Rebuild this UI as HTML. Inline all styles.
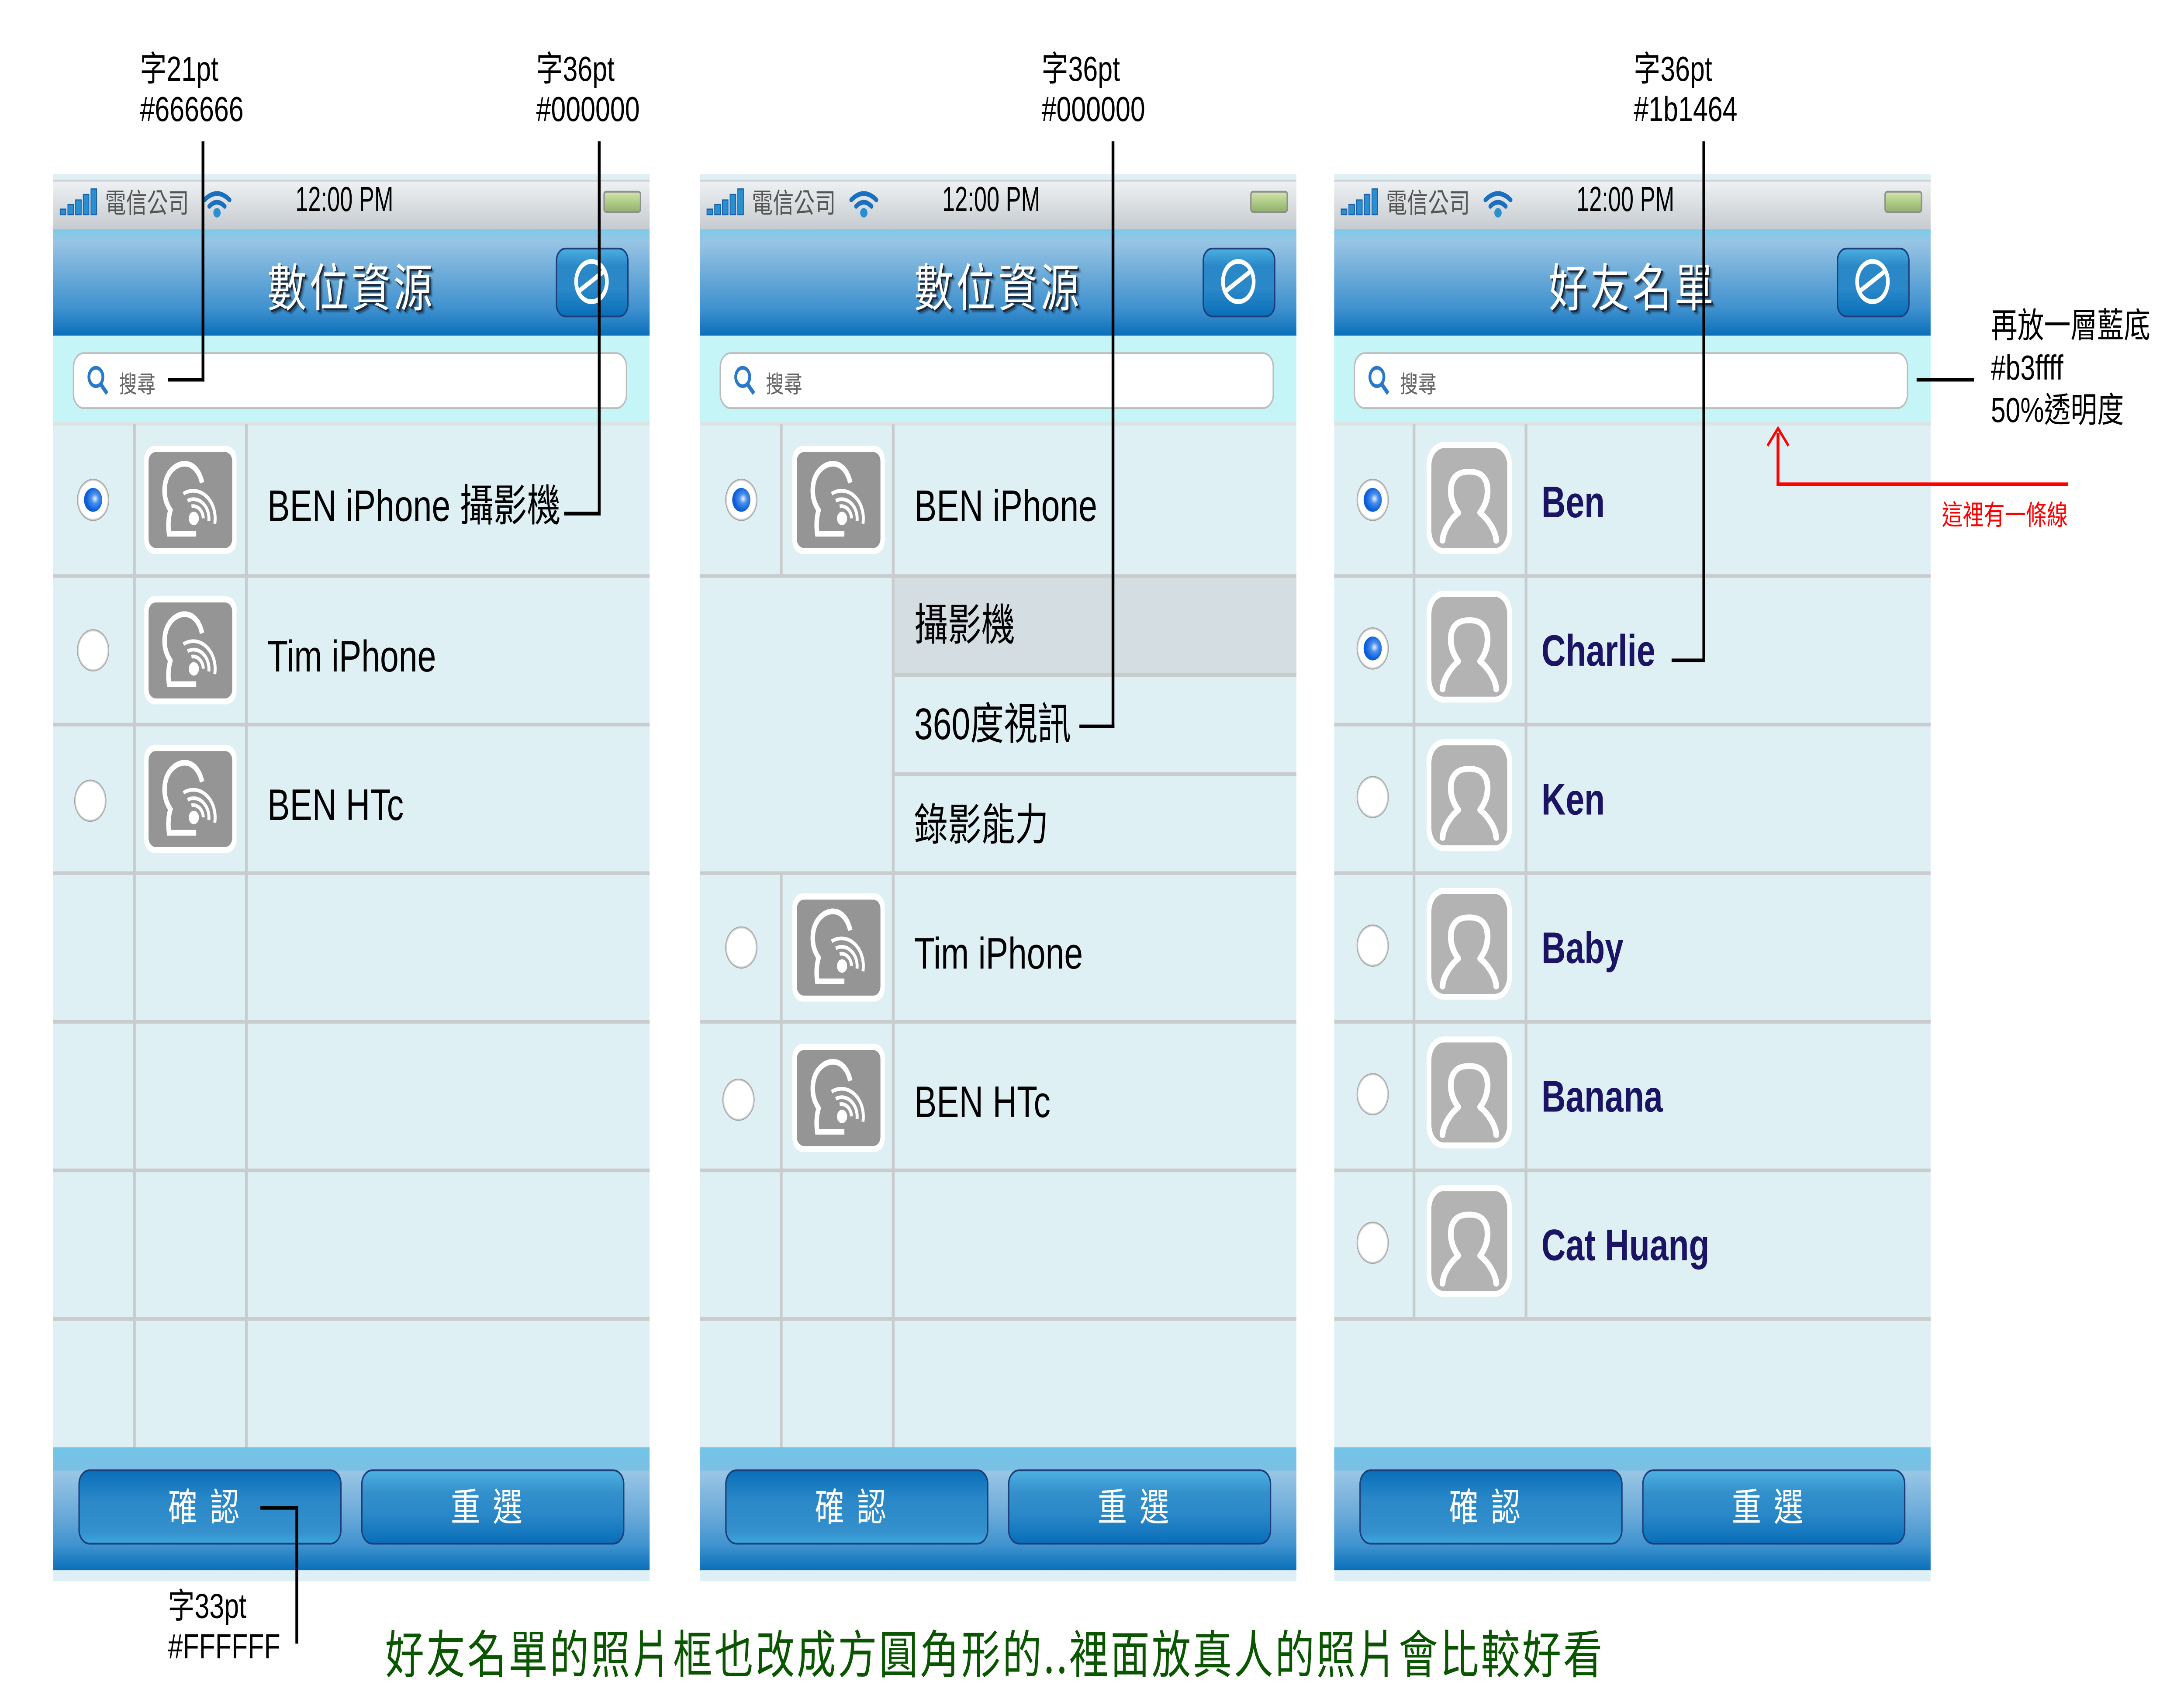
<!DOCTYPE html>
<html><head><meta charset="utf-8"><style>
*{margin:0;padding:0;box-sizing:border-box}
html,body{width:100%;height:100%;overflow:hidden;background:#fff}
#s{position:absolute;left:0;top:0;width:1560px;height:930px;transform:scale(4.1987);transform-origin:0 0;font-family:"Liberation Sans","Noto Sans CJK TC",sans-serif}
.a{position:absolute}
.ph{position:absolute;top:0;width:426px;height:930px}
.strip{position:absolute;left:0;width:426px;background:#dff0f5}
.sb{position:absolute;left:0;top:98px;width:426px;height:27px;background:linear-gradient(#eef1f3,#c6cbcf);border-top:1px solid #cfd3d6}
.nav{position:absolute;left:0;top:125px;width:426px;height:58px;background:linear-gradient(#7ccbea 0%,#97c4e4 12%,#68a9d8 45%,#3f91cf 75%,#0a6fb9 100%)}
.ttl{position:absolute;left:0;width:426px;top:136px;text-align:center;color:#fff;font-size:28px;letter-spacing:2px;text-shadow:1px 1px 0 #1a2a40,2px 2px 1px rgba(0,0,0,.4);font-family:"Noto Sans CJK TC",sans-serif}
.nb{position:absolute;left:359px;top:135px;width:52px;height:38px;border:1.5px solid #1c3f7c;border-radius:7px;background:linear-gradient(#4aaee0,#2a88c8 25%,#2a88c8 60%,#0a6fb9)}
.sa{position:absolute;left:0;top:183px;width:426px;height:48px;background:#c5f5f7}
.sx{position:absolute;left:14px;top:192px;width:396px;height:31px;background:#fff;border:1px solid #bdbdbd;border-radius:8px}
.rows{position:absolute;left:0;top:231px;width:426px;height:558px;background:#dff0f5}
.hl{position:absolute;height:2px;background:#c9cccd}
.vl{position:absolute;width:2px;background:#c9cccd}
.rd{position:absolute;width:23px;height:23px;border-radius:50%;background:radial-gradient(circle,#fff 62%,#9a9a9a 70%,#6f6f6f 100%)}
.rd.on::after{content:"";position:absolute;left:5px;top:5px;width:13px;height:13px;border-radius:50%;background:radial-gradient(circle at 60% 45%,#eaf4ff 0,#4b8fee 25%,#0a5fd8 60%,#0858d0 100%)}
.ic{position:absolute;width:66px;height:59px}
.tx{position:absolute;font-size:24px;color:#000;line-height:30px;font-family:"Liberation Sans","Noto Sans CJK TC",sans-serif}
.nm{position:absolute;font-size:24px;color:#1b1464;font-weight:bold;line-height:30px;font-family:"Liberation Sans",sans-serif}
.tb{position:absolute;left:0;top:789px;width:426px;height:67px;background:linear-gradient(#72c5e8 0,#7cbfe4 18%,#99c6e5 20%,#6aaad9 55%,#3f92cf 80%,#0a6fb9 100%)}
.bt{position:absolute;top:801px;width:188px;height:41px;border:1.5px solid #1c3f7c;border-radius:8px;color:#fff;font-size:21px;text-align:center;line-height:38px;letter-spacing:9px;font-family:"Noto Sans CJK TC",sans-serif}
.b1{left:18px;background:linear-gradient(#0a6fb9,#2a88c8 40%,#3590cc 85%,#3aa6dd)}
.b2{left:220px;background:linear-gradient(#4cb0e0,#3490cc 30%,#2a88c8 60%,#0a6fb9)}
.st{position:absolute;top:100px;font-size:15px;color:#555;font-family:"Noto Sans CJK TC",sans-serif}
.tm{position:absolute;top:99px;left:173px;font-size:19px;color:#000;transform:scaleX(.86);transform-origin:0 0;font-family:"Liberation Sans",sans-serif}
.bat{position:absolute;left:393px;top:104px;width:27px;height:12px;border:1px solid #8f8f8f;border-radius:2px;background:linear-gradient(#cfe3a6,#93b46e)}
.srt{position:absolute;top:199px;left:47px;font-size:13px;color:#666;font-family:"Noto Sans CJK TC",sans-serif}
.an{position:absolute;font-size:19px;line-height:22px;color:#000;font-family:"Liberation Sans","Noto Sans CJK TC",sans-serif}
.k{position:absolute;background:#000}
</style></head><body><div id="s">

<!-- ===== PHONE 1 ===== -->
<div class="ph" style="left:38px">
<div class="strip" style="top:95px;height:4px"></div>
<div class="sb"></div>
<svg class="a" style="left:4px;top:102px" width="28" height="16" viewBox="0 0 28 16"><g fill="#2a8fd0" stroke="#1a5fa8" stroke-width=".6"><rect x="1" y="12" width="4" height="3"/><rect x="6.5" y="9.5" width="4" height="5.5"/><rect x="12" y="7" width="4" height="8"/><rect x="17.5" y="4" width="4" height="11"/><rect x="23" y="1" width="4" height="14"/></g></svg>
<div class="st" style="left:37px">電信公司</div>
<svg class="a" style="left:106px;top:103px" width="22" height="16" viewBox="0 0 22 16"><g fill="none" stroke="#1a6fc0" stroke-width="2.6" stroke-linecap="round"><path d="M2 6 Q11 -1 20 6"/><path d="M5.5 9.5 Q11 5 16.5 9.5"/></g><circle cx="11" cy="13" r="2.6" fill="#2a8fd0"/></svg>
<div class="tm">12:00 PM</div>
<div class="bat"></div>
<div class="nav"></div>
<div class="ttl">數位資源</div>
<div class="nb"><svg width="49" height="35" viewBox="0 0 49 35"><circle cx="24.5" cy="17.5" r="11" fill="none" stroke="#fff" stroke-width="2.6"/><line x1="15" y1="23" x2="34" y2="11.5" stroke="#fff" stroke-width="2.6"/></svg></div>
<div class="sa"></div><div class="sx"></div>
<svg class="a" style="left:24px;top:199px" width="16" height="17" viewBox="0 0 16 17"><circle cx="6.5" cy="6.5" r="5" fill="none" stroke="#2a78c8" stroke-width="2"/><line x1="10" y1="10.5" x2="14.5" y2="15.5" stroke="#2a78c8" stroke-width="2.4"/></svg>
<div class="srt">搜尋</div>
<div class="rows"></div>
<div class="hl" style="left:0;width:426px;top:230px;background:#dbe3e5"></div>
<div class="hl" style="left:0;width:426px;top:313px"></div><div class="hl" style="left:0;width:426px;top:394px"></div><div class="hl" style="left:0;width:426px;top:475px"></div><div class="hl" style="left:0;width:426px;top:556px"></div><div class="hl" style="left:0;width:426px;top:637px"></div><div class="hl" style="left:0;width:426px;top:718px"></div>
<div class="vl" style="left:57px;top:231px;height:558px"></div><div class="vl" style="left:137px;top:231px;height:558px"></div>
<div class="rd on" style="left:17px;top:261px"></div>
<div class="rd" style="left:17px;top:343px"></div>
<div class="rd" style="left:15px;top:425px"></div>
<svg class="ic" style="left:65px;top:243px" viewBox="648 58 782 722" preserveAspectRatio="none"><rect x="648" y="58" width="782" height="722" rx="90" fill="#fff"/><rect x="685" y="100" width="708" height="640" rx="60" fill="#959595"/><path d="M1088 645 H858 C850 600 850 540 870 488 C830 440 815 390 822 330 C835 230 920 178 990 178 C1060 178 1115 225 1138 305" fill="none" stroke="#fff" stroke-width="38"/><g fill="none" stroke="#fff" stroke-width="25"><path d="M980 378 A185 185 0 0 1 1245 578"/><path d="M1015 425 A130 130 0 0 1 1195 560"/><path d="M1048 462 A85 85 0 0 1 1148 542"/></g><ellipse cx="1068" cy="543" rx="43" ry="45" fill="#fff"/></svg>
<svg class="ic" style="left:65px;top:325px" viewBox="648 58 782 722" preserveAspectRatio="none"><rect x="648" y="58" width="782" height="722" rx="90" fill="#fff"/><rect x="685" y="100" width="708" height="640" rx="60" fill="#959595"/><path d="M1088 645 H858 C850 600 850 540 870 488 C830 440 815 390 822 330 C835 230 920 178 990 178 C1060 178 1115 225 1138 305" fill="none" stroke="#fff" stroke-width="38"/><g fill="none" stroke="#fff" stroke-width="25"><path d="M980 378 A185 185 0 0 1 1245 578"/><path d="M1015 425 A130 130 0 0 1 1195 560"/><path d="M1048 462 A85 85 0 0 1 1148 542"/></g><ellipse cx="1068" cy="543" rx="43" ry="45" fill="#fff"/></svg>
<svg class="ic" style="left:65px;top:406px" viewBox="648 58 782 722" preserveAspectRatio="none"><rect x="648" y="58" width="782" height="722" rx="90" fill="#fff"/><rect x="685" y="100" width="708" height="640" rx="60" fill="#959595"/><path d="M1088 645 H858 C850 600 850 540 870 488 C830 440 815 390 822 330 C835 230 920 178 990 178 C1060 178 1115 225 1138 305" fill="none" stroke="#fff" stroke-width="38"/><g fill="none" stroke="#fff" stroke-width="25"><path d="M980 378 A185 185 0 0 1 1245 578"/><path d="M1015 425 A130 130 0 0 1 1195 560"/><path d="M1048 462 A85 85 0 0 1 1148 542"/></g><ellipse cx="1068" cy="543" rx="43" ry="45" fill="#fff"/></svg>
<div class="tx" style="left:153px;top:262px">BEN iPhone 攝影機</div>
<div class="tx" style="left:153px;top:344px">Tim iPhone</div>
<div class="tx" style="left:153px;top:425px">BEN HTc</div>
<div class="tb"></div>
<div class="bt b1">確認</div><div class="bt b2">重選</div>
<div class="strip" style="top:856px;height:6px"></div>
</div>

<!-- ===== PHONE 2 ===== -->
<div class="ph" style="left:500px">
<div class="strip" style="top:95px;height:4px"></div>
<div class="sb"></div>
<svg class="a" style="left:4px;top:102px" width="28" height="16" viewBox="0 0 28 16"><g fill="#2a8fd0" stroke="#1a5fa8" stroke-width=".6"><rect x="1" y="12" width="4" height="3"/><rect x="6.5" y="9.5" width="4" height="5.5"/><rect x="12" y="7" width="4" height="8"/><rect x="17.5" y="4" width="4" height="11"/><rect x="23" y="1" width="4" height="14"/></g></svg>
<div class="st" style="left:37px">電信公司</div>
<svg class="a" style="left:106px;top:103px" width="22" height="16" viewBox="0 0 22 16"><g fill="none" stroke="#1a6fc0" stroke-width="2.6" stroke-linecap="round"><path d="M2 6 Q11 -1 20 6"/><path d="M5.5 9.5 Q11 5 16.5 9.5"/></g><circle cx="11" cy="13" r="2.6" fill="#2a8fd0"/></svg>
<div class="tm">12:00 PM</div>
<div class="bat"></div>
<div class="nav"></div>
<div class="ttl">數位資源</div>
<div class="nb"><svg width="49" height="35" viewBox="0 0 49 35"><circle cx="24.5" cy="17.5" r="11" fill="none" stroke="#fff" stroke-width="2.6"/><line x1="15" y1="23" x2="34" y2="11.5" stroke="#fff" stroke-width="2.6"/></svg></div>
<div class="sa"></div><div class="sx"></div>
<svg class="a" style="left:24px;top:199px" width="16" height="17" viewBox="0 0 16 17"><circle cx="6.5" cy="6.5" r="5" fill="none" stroke="#2a78c8" stroke-width="2"/><line x1="10" y1="10.5" x2="14.5" y2="15.5" stroke="#2a78c8" stroke-width="2.4"/></svg>
<div class="srt">搜尋</div>
<div class="rows"></div>
<div class="a" style="left:139px;top:315px;width:287px;height:53px;background:#d4dee2"></div>
<div class="hl" style="left:0;width:426px;top:230px;background:#dbe3e5"></div>
<div class="hl" style="left:0;width:426px;top:313px"></div><div class="hl" style="left:139px;width:287px;top:367px"></div><div class="hl" style="left:139px;width:287px;top:421px"></div><div class="hl" style="left:0;width:426px;top:475px"></div><div class="hl" style="left:0;width:426px;top:556px"></div><div class="hl" style="left:0;width:426px;top:637px"></div><div class="hl" style="left:0;width:426px;top:718px"></div>
<div class="vl" style="left:57px;top:231px;height:82px"></div><div class="vl" style="left:57px;top:476px;height:313px"></div><div class="vl" style="left:137px;top:231px;height:558px"></div>
<div class="rd on" style="left:18px;top:261px"></div>
<div class="rd" style="left:18px;top:505px"></div>
<div class="rd" style="left:16px;top:588px"></div>
<svg class="ic" style="left:66px;top:243px" viewBox="648 58 782 722" preserveAspectRatio="none"><rect x="648" y="58" width="782" height="722" rx="90" fill="#fff"/><rect x="685" y="100" width="708" height="640" rx="60" fill="#959595"/><path d="M1088 645 H858 C850 600 850 540 870 488 C830 440 815 390 822 330 C835 230 920 178 990 178 C1060 178 1115 225 1138 305" fill="none" stroke="#fff" stroke-width="38"/><g fill="none" stroke="#fff" stroke-width="25"><path d="M980 378 A185 185 0 0 1 1245 578"/><path d="M1015 425 A130 130 0 0 1 1195 560"/><path d="M1048 462 A85 85 0 0 1 1148 542"/></g><ellipse cx="1068" cy="543" rx="43" ry="45" fill="#fff"/></svg>
<svg class="ic" style="left:66px;top:487px" viewBox="648 58 782 722" preserveAspectRatio="none"><rect x="648" y="58" width="782" height="722" rx="90" fill="#fff"/><rect x="685" y="100" width="708" height="640" rx="60" fill="#959595"/><path d="M1088 645 H858 C850 600 850 540 870 488 C830 440 815 390 822 330 C835 230 920 178 990 178 C1060 178 1115 225 1138 305" fill="none" stroke="#fff" stroke-width="38"/><g fill="none" stroke="#fff" stroke-width="25"><path d="M980 378 A185 185 0 0 1 1245 578"/><path d="M1015 425 A130 130 0 0 1 1195 560"/><path d="M1048 462 A85 85 0 0 1 1148 542"/></g><ellipse cx="1068" cy="543" rx="43" ry="45" fill="#fff"/></svg>
<svg class="ic" style="left:66px;top:569px" viewBox="648 58 782 722" preserveAspectRatio="none"><rect x="648" y="58" width="782" height="722" rx="90" fill="#fff"/><rect x="685" y="100" width="708" height="640" rx="60" fill="#959595"/><path d="M1088 645 H858 C850 600 850 540 870 488 C830 440 815 390 822 330 C835 230 920 178 990 178 C1060 178 1115 225 1138 305" fill="none" stroke="#fff" stroke-width="38"/><g fill="none" stroke="#fff" stroke-width="25"><path d="M980 378 A185 185 0 0 1 1245 578"/><path d="M1015 425 A130 130 0 0 1 1195 560"/><path d="M1048 462 A85 85 0 0 1 1148 542"/></g><ellipse cx="1068" cy="543" rx="43" ry="45" fill="#fff"/></svg>
<div class="tx" style="left:153px;top:262px">BEN iPhone</div>
<div class="tx" style="left:153px;top:327px">攝影機</div>
<div class="tx" style="left:153px;top:381px">360度視訊</div>
<div class="tx" style="left:153px;top:436px">錄影能力</div>
<div class="tx" style="left:153px;top:506px">Tim iPhone</div>
<div class="tx" style="left:153px;top:587px">BEN HTc</div>
<div class="tb"></div>
<div class="bt b1">確認</div><div class="bt b2">重選</div>
<div class="strip" style="top:856px;height:6px"></div>
</div>

<!-- ===== PHONE 3 ===== -->
<div class="ph" style="left:953px">
<div class="strip" style="top:95px;height:4px"></div>
<div class="sb"></div>
<svg class="a" style="left:4px;top:102px" width="28" height="16" viewBox="0 0 28 16"><g fill="#2a8fd0" stroke="#1a5fa8" stroke-width=".6"><rect x="1" y="12" width="4" height="3"/><rect x="6.5" y="9.5" width="4" height="5.5"/><rect x="12" y="7" width="4" height="8"/><rect x="17.5" y="4" width="4" height="11"/><rect x="23" y="1" width="4" height="14"/></g></svg>
<div class="st" style="left:37px">電信公司</div>
<svg class="a" style="left:106px;top:103px" width="22" height="16" viewBox="0 0 22 16"><g fill="none" stroke="#1a6fc0" stroke-width="2.6" stroke-linecap="round"><path d="M2 6 Q11 -1 20 6"/><path d="M5.5 9.5 Q11 5 16.5 9.5"/></g><circle cx="11" cy="13" r="2.6" fill="#2a8fd0"/></svg>
<div class="tm">12:00 PM</div>
<div class="bat"></div>
<div class="nav"></div>
<div class="ttl">好友名單</div>
<div class="nb"><svg width="49" height="35" viewBox="0 0 49 35"><circle cx="24.5" cy="17.5" r="11" fill="none" stroke="#fff" stroke-width="2.6"/><line x1="15" y1="23" x2="34" y2="11.5" stroke="#fff" stroke-width="2.6"/></svg></div>
<div class="sa"></div><div class="sx"></div>
<svg class="a" style="left:24px;top:199px" width="16" height="17" viewBox="0 0 16 17"><circle cx="6.5" cy="6.5" r="5" fill="none" stroke="#2a78c8" stroke-width="2"/><line x1="10" y1="10.5" x2="14.5" y2="15.5" stroke="#2a78c8" stroke-width="2.4"/></svg>
<div class="srt">搜尋</div>
<div class="rows"></div>
<div class="hl" style="left:0;width:426px;top:230px;background:#dbe3e5"></div>
<div class="hl" style="left:0;width:426px;top:313px"></div><div class="hl" style="left:0;width:426px;top:394px"></div><div class="hl" style="left:0;width:426px;top:475px"></div><div class="hl" style="left:0;width:426px;top:556px"></div><div class="hl" style="left:0;width:426px;top:637px"></div><div class="hl" style="left:0;width:426px;top:718px"></div>
<div class="vl" style="left:56px;top:231px;height:488px"></div><div class="vl" style="left:136px;top:231px;height:488px"></div>
<div class="rd on" style="left:16px;top:261px"></div>
<div class="rd on" style="left:16px;top:342px"></div>
<div class="rd" style="left:16px;top:423px"></div>
<div class="rd" style="left:16px;top:504px"></div>
<div class="rd" style="left:16px;top:585px"></div>
<div class="rd" style="left:16px;top:666px"></div>
<svg class="ic" style="left:66px;top:241px;width:61px;height:61px" viewBox="445 137 445 571" preserveAspectRatio="none"><rect x="445" y="137" width="445" height="571" rx="90" ry="115" fill="#fff"/><rect x="470" y="168" width="395" height="510" rx="65" ry="90" fill="#b3b3b3"/><g fill="none" stroke="#fff" stroke-width="30" stroke-linecap="round"><path d="M610 497 C575 450 565 400 575 350 C590 300 625 288 667 288 C709 288 744 300 759 350 C769 400 759 450 724 497"/><path d="M608 500 C570 530 530 590 528 640"/><path d="M726 500 C765 530 805 590 808 640"/></g></svg>
<svg class="ic" style="left:66px;top:322px;width:61px;height:61px" viewBox="445 137 445 571" preserveAspectRatio="none"><rect x="445" y="137" width="445" height="571" rx="90" ry="115" fill="#fff"/><rect x="470" y="168" width="395" height="510" rx="65" ry="90" fill="#b3b3b3"/><g fill="none" stroke="#fff" stroke-width="30" stroke-linecap="round"><path d="M610 497 C575 450 565 400 575 350 C590 300 625 288 667 288 C709 288 744 300 759 350 C769 400 759 450 724 497"/><path d="M608 500 C570 530 530 590 528 640"/><path d="M726 500 C765 530 805 590 808 640"/></g></svg>
<svg class="ic" style="left:66px;top:403px;width:61px;height:61px" viewBox="445 137 445 571" preserveAspectRatio="none"><rect x="445" y="137" width="445" height="571" rx="90" ry="115" fill="#fff"/><rect x="470" y="168" width="395" height="510" rx="65" ry="90" fill="#b3b3b3"/><g fill="none" stroke="#fff" stroke-width="30" stroke-linecap="round"><path d="M610 497 C575 450 565 400 575 350 C590 300 625 288 667 288 C709 288 744 300 759 350 C769 400 759 450 724 497"/><path d="M608 500 C570 530 530 590 528 640"/><path d="M726 500 C765 530 805 590 808 640"/></g></svg>
<svg class="ic" style="left:66px;top:484px;width:61px;height:61px" viewBox="445 137 445 571" preserveAspectRatio="none"><rect x="445" y="137" width="445" height="571" rx="90" ry="115" fill="#fff"/><rect x="470" y="168" width="395" height="510" rx="65" ry="90" fill="#b3b3b3"/><g fill="none" stroke="#fff" stroke-width="30" stroke-linecap="round"><path d="M610 497 C575 450 565 400 575 350 C590 300 625 288 667 288 C709 288 744 300 759 350 C769 400 759 450 724 497"/><path d="M608 500 C570 530 530 590 528 640"/><path d="M726 500 C765 530 805 590 808 640"/></g></svg>
<svg class="ic" style="left:66px;top:565px;width:61px;height:61px" viewBox="445 137 445 571" preserveAspectRatio="none"><rect x="445" y="137" width="445" height="571" rx="90" ry="115" fill="#fff"/><rect x="470" y="168" width="395" height="510" rx="65" ry="90" fill="#b3b3b3"/><g fill="none" stroke="#fff" stroke-width="30" stroke-linecap="round"><path d="M610 497 C575 450 565 400 575 350 C590 300 625 288 667 288 C709 288 744 300 759 350 C769 400 759 450 724 497"/><path d="M608 500 C570 530 530 590 528 640"/><path d="M726 500 C765 530 805 590 808 640"/></g></svg>
<svg class="ic" style="left:66px;top:646px;width:61px;height:61px" viewBox="445 137 445 571" preserveAspectRatio="none"><rect x="445" y="137" width="445" height="571" rx="90" ry="115" fill="#fff"/><rect x="470" y="168" width="395" height="510" rx="65" ry="90" fill="#b3b3b3"/><g fill="none" stroke="#fff" stroke-width="30" stroke-linecap="round"><path d="M610 497 C575 450 565 400 575 350 C590 300 625 288 667 288 C709 288 744 300 759 350 C769 400 759 450 724 497"/><path d="M608 500 C570 530 530 590 528 640"/><path d="M726 500 C765 530 805 590 808 640"/></g></svg>
<div class="nm" style="left:148px;top:260px">Ben</div>
<div class="nm" style="left:148px;top:341px">Charlie</div>
<div class="nm" style="left:148px;top:422px">Ken</div>
<div class="nm" style="left:148px;top:503px">Baby</div>
<div class="nm" style="left:148px;top:584px">Banana</div>
<div class="nm" style="left:148px;top:665px">Cat Huang</div>
<div class="tb"></div>
<div class="bt b1">確認</div><div class="bt b2">重選</div>
<div class="strip" style="top:856px;height:6px"></div>
</div>

<!-- ===== ANNOTATIONS ===== -->
<div class="an" style="left:100px;top:28px">字21pt<br>#666666</div>
<div class="k" style="left:144px;top:77px;width:2px;height:131px"></div>
<div class="k" style="left:120px;top:206px;width:26px;height:2px"></div>

<div class="an" style="left:383px;top:28px">字36pt<br>#000000</div>
<div class="k" style="left:427px;top:77px;width:2px;height:204px"></div>
<div class="k" style="left:403px;top:279px;width:26px;height:2px"></div>

<div class="an" style="left:744px;top:28px">字36pt<br>#000000</div>
<div class="k" style="left:794px;top:77px;width:2px;height:320px"></div>
<div class="k" style="left:771px;top:395px;width:25px;height:2px"></div>

<div class="an" style="left:1167px;top:28px">字36pt<br>#1b1464</div>
<div class="k" style="left:1216px;top:77px;width:2px;height:284px"></div>
<div class="k" style="left:1194px;top:359px;width:24px;height:2px"></div>

<div class="an" style="left:1422px;top:167px;line-height:23px">再放一層藍底<br>#b3ffff<br>50%透明度</div>
<div class="k" style="left:1369px;top:206px;width:41px;height:2px"></div>

<div class="a" style="left:1269px;top:236px;width:2px;height:29px;background:#f00"></div>
<div class="a" style="left:1269px;top:263px;width:208px;height:2px;background:#f00"></div>
<svg class="a" style="left:1261px;top:232px" width="18" height="12" viewBox="0 0 18 12"><path d="M1.5 11 L9 1.5 L16.5 11" fill="none" stroke="#f00" stroke-width="1.6"/></svg>
<div class="an" style="left:1387px;top:271px;font-size:15px;color:#f00">這裡有一條線</div>

<div class="k" style="left:186px;top:821px;width:27px;height:2px"></div>
<div class="k" style="left:211px;top:821px;width:2px;height:75px"></div>
<div class="an" style="left:120px;top:866px">字33pt<br>#FFFFFF</div>

<div class="an" style="left:275px;top:884px;font-size:28px;line-height:34px;color:#0a5500;letter-spacing:1.4px;font-family:'Noto Sans CJK TC',sans-serif">好友名單的照片框也改成方圓角形的..裡面放真人的照片會比較好看</div>

</div>
<script>
(function(){
  var w=window.innerWidth||document.documentElement.clientWidth||6550;
  var h=window.innerHeight||document.documentElement.clientHeight||3905;
  document.getElementById('s').style.transform='scale('+(w/1560)+','+(h/930)+')';
})();
</script>
</body></html>
